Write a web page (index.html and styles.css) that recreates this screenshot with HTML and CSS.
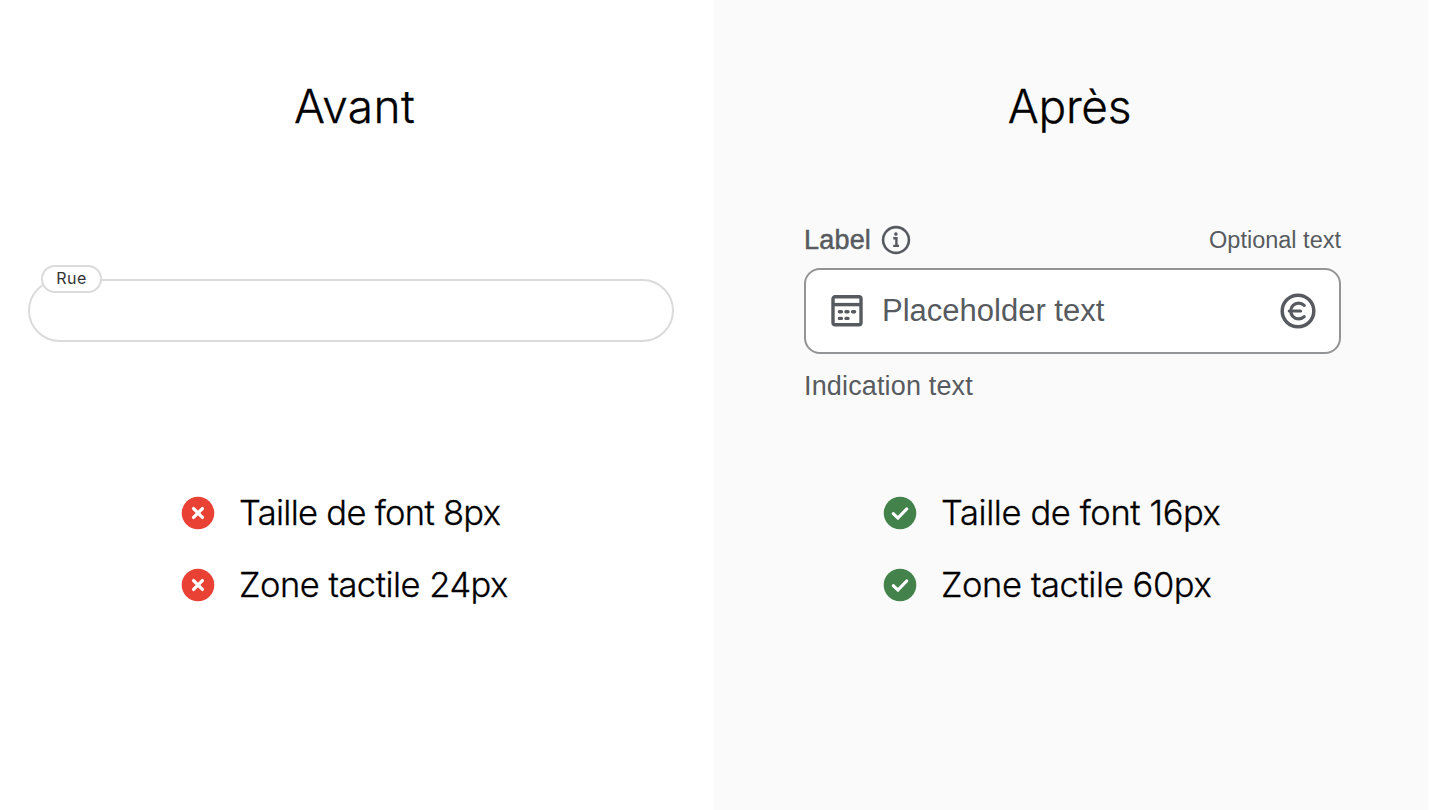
FILE: index.html
```
<!DOCTYPE html>
<html lang="fr">
<head>
  <meta charset="UTF-8">
  <meta name="viewport" content="width=device-width, initial-scale=1.0">
  <title>Avant / Après</title>
  <link rel="stylesheet" href="styles.css">
</head>
<body>
  <main class="comparison">
    <section class="panel before">
      <h1>Avant</h1>

      <div class="old-field">
        <span class="old-label">Rue</span>
      </div>

      <ul class="points">
        <li>
          <svg class="status" viewBox="0 0 34 34">
            <circle cx="17" cy="17" r="16.3" fill="#e94235"/>
            <path d="M12.6 12.6l8.8 8.8M21.4 12.6l-8.8 8.8" stroke="#fff" stroke-width="3.3" stroke-linecap="round"/>
          </svg>
          <span class="taille-8">Taille de font 8px</span>
        </li>
        <li>
          <svg class="status" viewBox="0 0 34 34">
            <circle cx="17" cy="17" r="16.3" fill="#e94235"/>
            <path d="M12.6 12.6l8.8 8.8M21.4 12.6l-8.8 8.8" stroke="#fff" stroke-width="3.3" stroke-linecap="round"/>
          </svg>
          <span class="zone-24">Zone tactile 24px</span>
        </li>
      </ul>
    </section>

    <section class="panel after">
      <h1>Après</h1>

      <div class="new-field">
        <div class="field-header">
          <label for="field">Label</label>
          <svg class="info" viewBox="0 0 30 30" fill="none" stroke="#575b5f" stroke-width="2.6">
            <circle cx="15" cy="15" r="12.9"/>
            <path d="M12.2 13.2h3.2v7.4M12.2 20.9h5.8" stroke-width="2.4"/>
            <circle cx="14.9" cy="9.1" r="1.8" fill="#575b5f" stroke="none"/>
          </svg>
          <span class="optional">Optional text</span>
        </div>
        <div class="field-box">
          <svg class="calendar" viewBox="0 0 32 32" fill="none" stroke="#575b5f" stroke-width="3.4">
            <rect x="2" y="1.8" width="28" height="28" rx="2"/>
            <path d="M2 9.6h28"/>
            <path d="M8.4 16.7h2M15 16.7h2M21.6 16.7h2M8.4 23.4h2M15 23.4h2" stroke-linecap="round"/>
          </svg>
          <input type="text" id="field" placeholder="Placeholder text">
          <svg class="euro" viewBox="0 0 36 36" fill="none" stroke="#575b5f" stroke-width="3.5">
            <circle cx="18" cy="18" r="15.8"/>
            <path d="M24.2 12.4a7.9 7.9 0 1 0 0 11.2M9.3 18h11.2" stroke-width="3.2" stroke-linecap="round"/>
          </svg>
        </div>
        <p class="indication">Indication text</p>
      </div>

      <ul class="points">
        <li>
          <svg class="status" viewBox="0 0 34 34">
            <circle cx="17" cy="17" r="16.3" fill="#43824b"/>
            <path d="M10.3 17.6l4.6 4.5 8.8-9.1" fill="none" stroke="#fff" stroke-width="3.2" stroke-linecap="round"/>
          </svg>
          <span class="taille-16">Taille de font 16px</span>
        </li>
        <li>
          <svg class="status" viewBox="0 0 34 34">
            <circle cx="17" cy="17" r="16.3" fill="#43824b"/>
            <path d="M10.3 17.6l4.6 4.5 8.8-9.1" fill="none" stroke="#fff" stroke-width="3.2" stroke-linecap="round"/>
          </svg>
          <span class="zone-60">Zone tactile 60px</span>
        </li>
      </ul>
    </section>
  </main>
</body>
</html>
```
FILE: styles.css
```
* {
  box-sizing: border-box;
}

body {
  margin: 0;
  background-color: #ffffff;
  color: #000000;
  font-family: "Liberation Sans", Arial, sans-serif;
}

.comparison {
  display: grid;
  grid-template-columns: 714px 714px;
  height: 810px;
}

.panel {
  display: grid;
  grid-template-rows: 72px 98px 178px auto;
  align-content: start;
  padding-top: 70px;
}

.after {
  background-color: #fafafa;
}

h1 {
  margin: 0;
  font-family: Inter, sans-serif;
  font-size: 46px;
  font-weight: 300;
  line-height: 73px;
  letter-spacing: -0.3px;
  text-align: center;
  -webkit-text-stroke: 0.3px #000000;
}

.before h1 {
  padding-right: 5px;
  letter-spacing: 0.4px;
}

.after h1 {
  padding-right: 3px;
}

.points {
  grid-row: 4;
  display: flex;
  flex-direction: column;
  margin: 59px 0 0 181px;
  padding: 0;
  list-style: none;
}

.after .points {
  margin-left: 169px;
}

.points li {
  display: flex;
  align-items: center;
  gap: 24px;
  height: 72px;
  font-family: Inter, sans-serif;
  font-size: 34.5px;
  font-weight: 300;
  letter-spacing: -0.8px;
  -webkit-text-stroke: 0.3px #000000;
}

.points span {
  padding-bottom: 2px;
}

.points .taille-8 {
  letter-spacing: -0.7px;
}

.points .zone-24 {
  letter-spacing: -0.5px;
}

.points .taille-16,
.points .zone-60 {
  letter-spacing: -0.4px;
}

.status {
  width: 34px;
  height: 34px;
}

.old-field {
  grid-row: 3;
  position: relative;
  width: 646px;
  height: 63px;
  margin: 39px 0 0 28px;
  border: 2px solid #dbdbdb;
  border-radius: 32px;
}

.old-label {
  position: absolute;
  top: -16px;
  left: 11px;
  width: 61px;
  height: 28px;
  border: 2px solid #dbdbdb;
  border-radius: 15px;
  background-color: #ffffff;
  color: #333333;
  font-family: Inter, sans-serif;
  font-size: 16px;
  line-height: 23px;
  letter-spacing: 0.5px;
  text-align: center;
}

.new-field {
  grid-row: 3;
  width: 537px;
  margin-left: 90px;
  margin-top: -16px;
  color: #575b5f;
}

.field-header {
  display: flex;
  align-items: center;
  height: 32px;
  margin-bottom: 12px;
}

.field-header label {
  font-size: 27px;
  letter-spacing: 0.2px;
  -webkit-text-stroke: 0.5px #575b5f;
}

.info {
  width: 30px;
  height: 30px;
  margin-left: 10px;
}

.optional {
  margin-left: auto;
  font-size: 23.5px;
}

.field-box {
  display: flex;
  align-items: center;
  height: 86px;
  padding: 0 23px 0 25px;
  border: 2px solid #929496;
  border-radius: 16px;
  background-color: #ffffff;
}

.calendar {
  width: 32px;
  height: 32px;
}

.field-box input {
  flex: 1;
  min-width: 0;
  margin-left: 19px;
  padding: 0;
  border: none;
  outline: none;
  background: none;
  color: #575b5f;
  font-family: inherit;
  font-size: 31px;
}

.field-box input::placeholder {
  color: #575b5f;
}

.euro {
  width: 36px;
  height: 36px;
}

.indication {
  margin: 16px 0 0;
  font-size: 27px;
  line-height: 32px;
  letter-spacing: 0.15px;
}
```
